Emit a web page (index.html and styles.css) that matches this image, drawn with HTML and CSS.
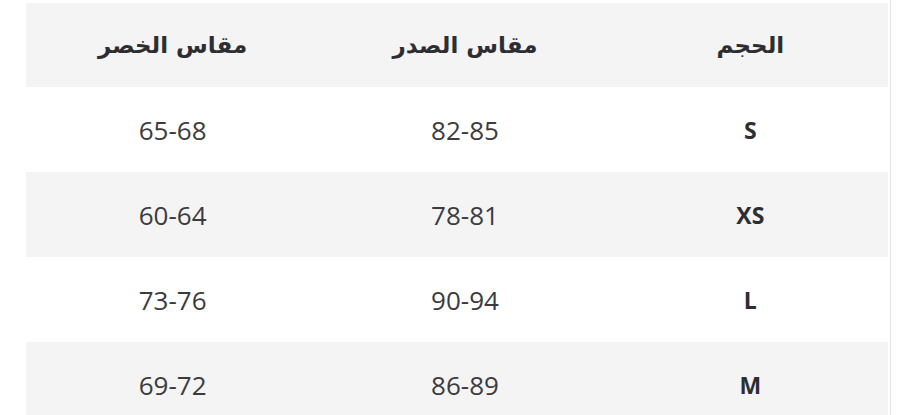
FILE: index.html
```
<!DOCTYPE html>
<html lang="ar">
<head>
<meta charset="utf-8">
<link rel="stylesheet" href="styles.css">
</head>
<body>
<div class="wrap">
  <table class="sizes" dir="rtl">
    <thead>
      <tr><th>الحجم</th><th>مقاس الصدر</th><th>مقاس الخصر</th></tr>
    </thead>
    <tbody>
      <tr><td class="sz">S</td><td>82-85</td><td>65-68</td></tr>
      <tr class="alt"><td class="sz">XS</td><td>78-81</td><td>60-64</td></tr>
      <tr><td class="sz">L</td><td>90-94</td><td>73-76</td></tr>
      <tr class="alt"><td class="sz">M</td><td>86-89</td><td>69-72</td></tr>
    </tbody>
  </table>
</div>
</body>
</html>
```
FILE: styles.css
```
html, body {
  margin: 0;
  padding: 0;
  background: #ffffff;
  height: 415px;
  overflow: hidden;
}
.wrap {
  box-sizing: border-box;
  width: 891px;
  margin: 0;
  padding: 3px 2px 0 26px;
  border-right: 1px solid #e4e4e4;
  height: 415px;
}
.sizes {
  width: 862px;
  border-collapse: collapse;
  table-layout: fixed;
  font-family: "Open Sans", "DejaVu Sans", sans-serif;
  color: #3b3b3f;
}
.sizes th, .sizes td {
  text-align: center;
  padding: 0;
}
.sizes th {
  height: 84px;
  background: #f4f4f5;
  font-family: "DejaVu Sans", sans-serif;
  font-weight: bold;
  font-size: 23px;
  color: #2e2e32;
}
.sizes th:first-child, .sizes td:first-child { padding-left: 12px; }
.sizes th:nth-child(2), .sizes td:nth-child(2) { padding-left: 16px; }
.sizes th:last-child, .sizes td:last-child { padding-left: 6px; }
.sizes td {
  height: 85px;
  font-size: 26px;
}
.sizes tr.alt td {
  background: #f4f4f5;
}
.sizes td.sz {
  font-weight: bold;
  font-size: 23px;
  color: #2e2e32;
}
```
